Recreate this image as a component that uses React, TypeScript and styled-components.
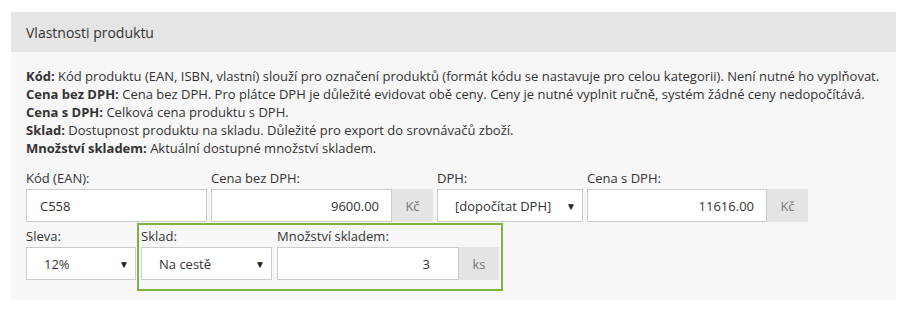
import styled, { createGlobalStyle } from "styled-components";

const GlobalStyle = createGlobalStyle`
  html, body {
    margin: 0;
    padding: 0;
    background: #ffffff;
  }
  body {
    font-family: "Open Sans", "Liberation Sans", sans-serif;
    font-size: 13px;
    color: #333333;
  }
`;

const Page = styled.div`
  padding: 12px 12px 14px 11px;
`;

const Panel = styled.section`
  width: 885px;
  background-color: #f7f7f7;
`;

const PanelHeader = styled.header`
  height: 40px;
  display: flex;
  align-items: center;
  padding: 0 15px;
  background-color: #e5e5e5;
  font-size: 14px;
  color: #333333;
`;

const PanelBody = styled.div`
  padding: 15px 15px 9px 15px;
`;

const Help = styled.div`
  line-height: 18px;
  margin-bottom: 12px;

  & > p {
    margin: 0;
  }

  b {
    font-weight: 700;
  }
`;

const Row = styled.div<{ gap?: number; spaceBelow?: number }>`
  display: flex;
  align-items: flex-start;
  gap: ${(props) => props.gap ?? 4}px;
  margin-bottom: ${(props) => props.spaceBelow ?? 0}px;
`;

const Field = styled.div<{ width: number; offset?: number }>`
  display: flex;
  flex-direction: column;
  width: ${(props) => props.width}px;
  margin-top: ${(props) => props.offset ?? 0}px;
`;

const Label = styled.label`
  display: block;
  line-height: 18px;
  margin-bottom: 2px;
  color: #333333;
`;

const InputGroup = styled.div`
  display: flex;
  height: 33px;
`;

const TextInput = styled.input<{ align?: string; padRight?: number }>`
  flex: 1;
  min-width: 0;
  height: 33px;
  box-sizing: border-box;
  margin: 0;
  padding: 0 ${(props) => props.padRight ?? 12}px 0 13px;
  border: 1px solid #cccccc;
  background-color: #ffffff;
  font-family: inherit;
  font-size: 13px;
  color: #333333;
  text-align: ${(props) => props.align ?? "left"};
  outline: none;
`;

const Addon = styled.span<{ width: number }>`
  display: flex;
  align-items: center;
  justify-content: center;
  width: ${(props) => props.width}px;
  height: 33px;
  background-color: #e4e4e4;
  color: #777777;
`;

const SelectBox = styled.div`
  display: flex;
  align-items: center;
  justify-content: space-between;
  height: 33px;
  box-sizing: border-box;
  padding: 0 6px 0 17px;
  border: 1px solid #cccccc;
  background-color: #ffffff;
  color: #333333;
`;

const Arrow = styled.span`
  font-size: 10px;
  color: #222222;
`;

const Highlight = styled.div`
  display: flex;
  gap: 5px;
  padding: 2px 2px 9px 2px;
  border: 2px solid #7fb241;
`;

function Select({ value }: { value: string }) {
  return (
    <SelectBox>
      <span>{value}</span>
      <Arrow>▼</Arrow>
    </SelectBox>
  );
}

export default function App() {
  return (
    <>
      <GlobalStyle />
      <Page>
        <Panel>
          <PanelHeader>Vlastnosti produktu</PanelHeader>
          <PanelBody>
            <Help>
              <p>
                <b>Kód:</b> Kód produktu (EAN, ISBN, vlastní) slouží pro označení produktů (formát kódu se nastavuje pro celou kategorii). Není nutné ho vyplňovat.
              </p>
              <p>
                <b>Cena bez DPH:</b> Cena bez DPH. Pro plátce DPH je důležité evidovat obě ceny. Ceny je nutné vyplnit ručně, systém žádné ceny nedopočítává.
              </p>
              <p>
                <b>Cena s DPH:</b> Celková cena produktu s DPH.
              </p>
              <p>
                <b>Sklad:</b> Dostupnost produktu na skladu. Důležité pro export do srovnávačů zboží.
              </p>
              <p>
                <b>Množství skladem:</b> Aktuální dostupné množství skladem.
              </p>
            </Help>
            <Row spaceBelow={1}>
              <Field width={181}>
                <Label>Kód (EAN):</Label>
                <InputGroup>
                  <TextInput defaultValue="C558" />
                </InputGroup>
              </Field>
              <Field width={222}>
                <Label>Cena bez DPH:</Label>
                <InputGroup>
                  <TextInput align="right" defaultValue="9600.00" />
                  <Addon width={41}>Kč</Addon>
                </InputGroup>
              </Field>
              <Field width={146}>
                <Label>DPH:</Label>
                <Select value="[dopočítat DPH]" />
              </Field>
              <Field width={221}>
                <Label>Cena s DPH:</Label>
                <InputGroup>
                  <TextInput align="right" defaultValue="11616.00" />
                  <Addon width={41}>Kč</Addon>
                </InputGroup>
              </Field>
            </Row>
            <Row gap={1}>
              <Field width={110} offset={4}>
                <Label>Sleva:</Label>
                <Select value="12%" />
              </Field>
              <Highlight>
                <Field width={131}>
                  <Label>Sklad:</Label>
                  <Select value="Na cestě" />
                </Field>
                <Field width={222}>
                  <Label>Množství skladem:</Label>
                  <InputGroup>
                    <TextInput align="right" padRight={28} defaultValue="3" />
                    <Addon width={40}>ks</Addon>
                  </InputGroup>
                </Field>
              </Highlight>
            </Row>
          </PanelBody>
        </Panel>
      </Page>
    </>
  );
}
